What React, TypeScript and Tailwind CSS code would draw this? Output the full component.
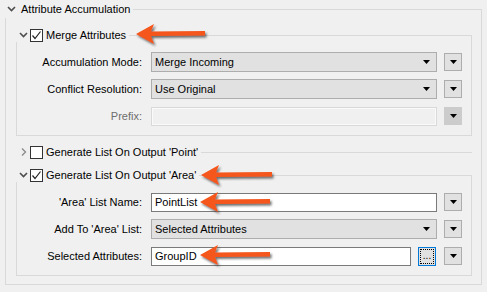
import type { ReactNode } from 'react'

const Tri = () => (
	<svg width="7" height="4" viewBox="0 0 7 4" className="shrink-0">
		<polygon points="0,0 7,0 3.5,4" fill="#000" />
	</svg>
)

const ChevronDown = () => (
	<svg width="9" height="6" viewBox="0 0 9 6" className="shrink-0">
		<polyline points="1,1 4.5,4.5 8,1" fill="none" stroke="#4d4d4d" strokeWidth="1.6" />
	</svg>
)

const ChevronRight = () => (
	<svg width="9" height="8" viewBox="0 0 9 8" className="shrink-0">
		<polyline points="3,0.5 6.5,4 3,7.5" fill="none" stroke="#8a8a8a" strokeWidth="1.3" />
	</svg>
)

const Check = ({ checked }: { checked: boolean }) => (
	<div className="w-[13px] h-[13px] border border-[#333] bg-white shrink-0 flex items-center justify-center">
		{checked && (
			<svg width="11" height="11" viewBox="0 0 11 11">
				<polyline points="1.5,5.5 4,8.5 9.5,1.5" fill="none" stroke="#222" strokeWidth="1.2" />
			</svg>
		)}
	</div>
)

const SideButton = ({ disabled = false }: { disabled?: boolean }) => (
	<div
		className={`w-[18px] h-[18px] shrink-0 flex items-center justify-center border ${
			disabled ? 'bg-[#cccccc] border-[#cccccc]' : 'bg-[#e1e1e1] border-[#adadad]'
		}`}
	>
		<Tri />
	</div>
)

const Select = ({ value }: { value: string }) => (
	<div className="flex-1 h-[20px] bg-[#e1e1e1] border border-[#adadad] flex items-center pl-[3px] pr-[6px]">
		<span className="flex-1">{value}</span>
		<Tri />
	</div>
)

const Input = ({ value, disabled = false }: { value?: string; disabled?: boolean }) => (
	<div
		className={`flex-1 h-[19px] border flex items-center pl-[3px] ${
			disabled ? 'bg-[#f0f0f0] border-[#d9d9d9] shadow-[inset_0_0_0_1px_#fafafa]' : 'bg-white border-[#7a7a7a]'
		}`}
	>
		{value}
	</div>
)

const Row = ({ label, children, muted = false }: { label: string; children: ReactNode; muted?: boolean }) => (
	<div className="flex items-center h-[20px]">
		<div className={`w-[126px] text-right pr-px ${muted ? 'text-[#6d6d6d]' : ''}`}>{label}</div>
		<div className="flex-1 flex items-center ml-[8px] gap-[7px]">{children}</div>
	</div>
)

const GroupHeader = ({ title, open, checked, boxed }: { title: string; open: boolean; checked: boolean; boxed: boolean }) => (
	<div className="flex items-center h-[14px]">
		<div className="w-[13px] flex justify-center ml-px">{open ? <ChevronDown /> : <ChevronRight />}</div>
		<div className="ml-[0px]">
			<Check checked={checked} />
		</div>
		<span className="ml-[3px] whitespace-nowrap">{title}</span>
		{boxed ? (
			<div className="flex-1 self-end h-[7px] border-t border-r border-[#d9d9d9] ml-[3px]" />
		) : (
			<div className="flex-1 h-px bg-[#d9d9d9] ml-[3px]" />
		)}
	</div>
)

const Arrow = ({ x, y, tail }: { x: number; y: number; tail: number }) => {
	const pts = [
		[x, y],
		[x + 18, y - 10],
		[x + 15, y - 2.5],
		[tail, y - 3],
		[tail, y + 1.5],
		[x + 15, y + 2],
		[x + 18, y + 10],
	]
	return <polygon points={pts.map((p) => p.join(',')).join(' ')} fill="#f4561d" filter="url(#sh)" />
}

export default function App() {
	return (
		<div
			className="relative w-[487px] h-[292px] bg-[#f0f0f0] text-[11px] text-black overflow-hidden"
			style={{ fontFamily: '"Liberation Sans", Arial, sans-serif' }}
		>
			<div className="flex items-center h-[18px] pl-[7px] pr-[5px]">
				<ChevronDown />
				<span className="ml-[5px] whitespace-nowrap">Attribute Accumulation</span>
				<div className="flex-1 self-end h-[9px] border-t border-r border-[#d9d9d9] ml-[3px]" />
			</div>
			<div className="ml-[5px] w-[477px] border-l border-r border-b border-[#d9d9d9] pt-[10px] pb-[8px] pl-[10px] pr-[9px]">
				<GroupHeader title="Merge Attributes" open checked boxed />
				<div className="border-l border-r border-b border-[#d9d9d9] pt-[10px] pb-[9px] pr-[9px] flex flex-col gap-[7px]">
					<Row label="Accumulation Mode:">
						<Select value="Merge Incoming" />
						<SideButton />
					</Row>
					<Row label="Conflict Resolution:">
						<Select value="Use Original" />
						<SideButton />
					</Row>
					<Row label="Prefix:" muted>
						<Input disabled />
						<SideButton disabled />
					</Row>
				</div>
				<div className="mt-[9px]">
					<GroupHeader title="Generate List On Output 'Point'" open={false} checked={false} boxed={false} />
				</div>
				<div className="mt-[9px]">
					<GroupHeader title="Generate List On Output 'Area'" open checked boxed />
				</div>
				<div className="border-l border-r border-b border-[#d9d9d9] pt-[10px] pb-[9px] pr-[9px] flex flex-col gap-[7px]">
					<Row label="'Area' List Name:">
						<Input value="PointList" />
						<SideButton />
					</Row>
					<Row label="Add To 'Area' List:">
						<Select value="Selected Attributes" />
						<SideButton />
					</Row>
					<Row label="Selected Attributes:">
						<Input value="GroupID" />
						<div className="w-[18px] h-[19px] border border-[#0078d7] bg-[#e1e1e1] p-px shrink-0">
							<div className="w-full h-full border border-dotted border-black flex items-end justify-center leading-none pb-[2px] text-[10px]">
								...
							</div>
						</div>
						<div className="ml-px">
							<SideButton />
						</div>
					</Row>
				</div>
			</div>
			<svg className="absolute inset-0 pointer-events-none" width="487" height="292">
				<defs>
					<filter id="sh" x="-20%" y="-50%" width="140%" height="200%">
						<feDropShadow dx="1.5" dy="2" stdDeviation="1" floodColor="#333" floodOpacity="0.7" />
					</filter>
				</defs>
				<Arrow x={136} y={34} tail={205} />
				<Arrow x={201} y={175} tail={272} />
				<Arrow x={200} y={202} tail={270} />
				<Arrow x={200} y={255} tail={270} />
			</svg>
		</div>
	)
}
